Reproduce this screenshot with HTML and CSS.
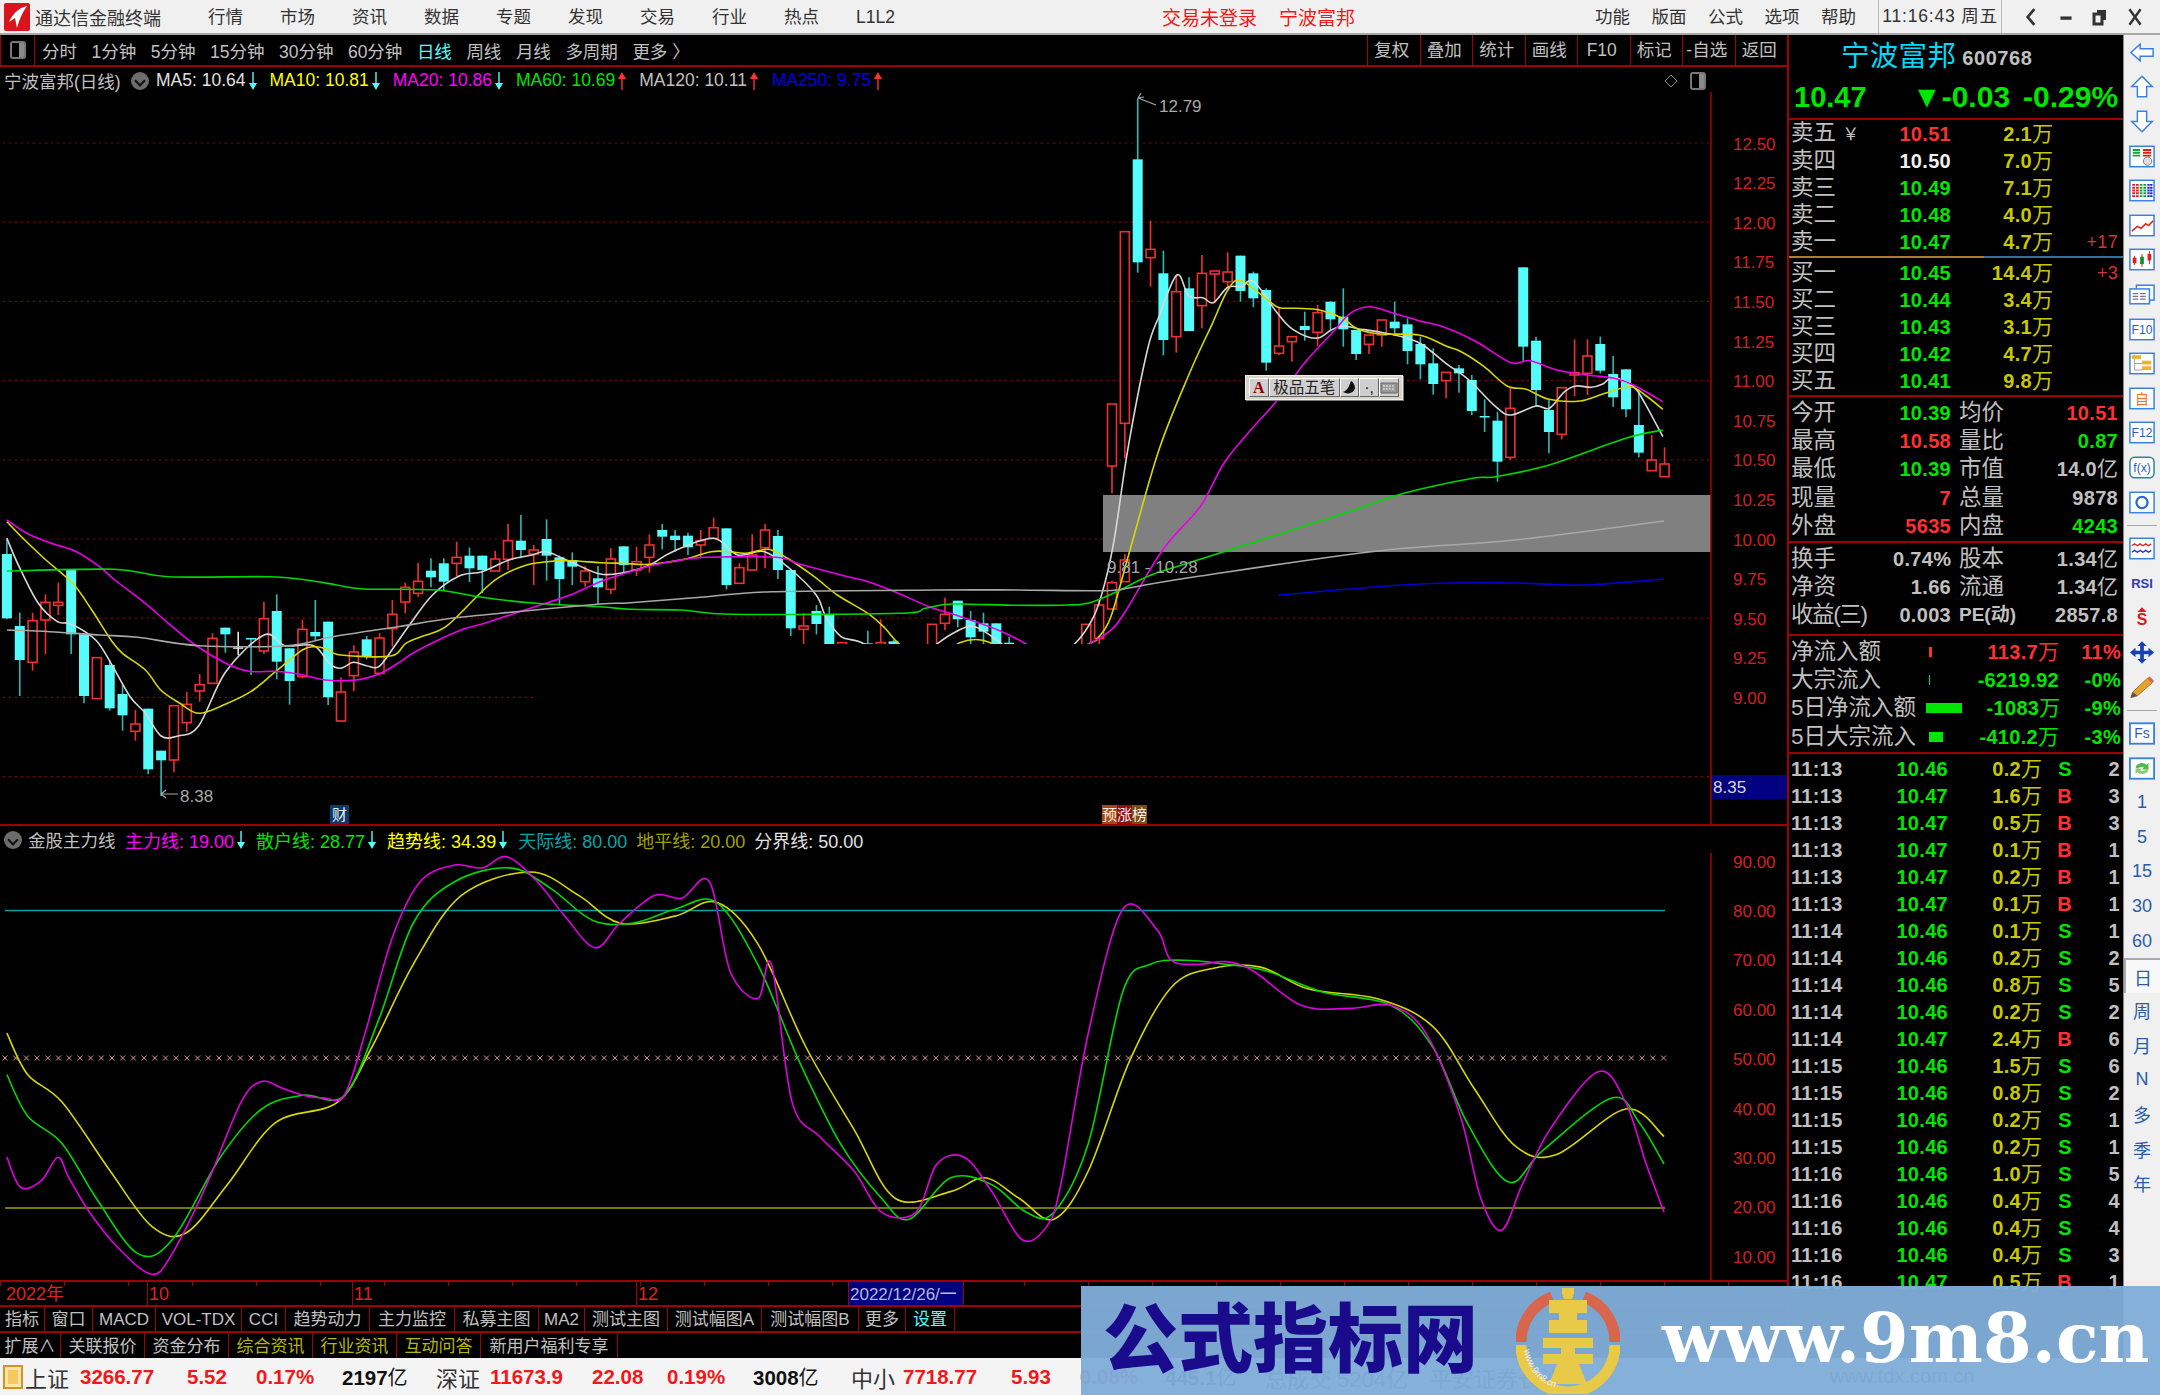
FILE: index.html
```html
<!DOCTYPE html>
<html lang="zh-CN">
<head>
  <meta charset="UTF-8">
  <title>通达信金融终端</title>
  <link rel="stylesheet" href="styles.css">
</head>
<body>
<svg class="defs" width="0" height="0">
  <symbol id="arr-down" viewBox="0 0 10 18"><path d="M5 0V15" stroke="currentColor" stroke-width="1.4"/><path d="M1 11H9L5 18Z" fill="currentColor"/></symbol>
  <symbol id="arr-up" viewBox="0 0 10 18"><path d="M5 3V18" stroke="currentColor" stroke-width="1.4"/><path d="M1 7H9L5 0Z" fill="currentColor"/></symbol>
</svg>

<header class="titlebar">
  <svg class="logo" viewBox="0 0 26 28"><rect width="26" height="28" rx="2" fill="#d8141c"/><path d="M23 3C15 5 9 10 5 19l6-4 2 10c2-8 5-15 10-22Z" fill="#fff"/></svg>
  <span class="app-name">通达信金融终端</span>
  <nav class="menu">
    <a>行情</a><a>市场</a><a>资讯</a><a>数据</a><a>专题</a><a>发现</a><a>交易</a><a>行业</a><a>热点</a><a>L1L2</a>
  </nav>
  <div class="login"><span>交易未登录</span><span>宁波富邦</span></div>
  <nav class="menu-right"><a>功能</a><a>版面</a><a>公式</a><a>选项</a><a>帮助</a></nav>
  <div class="clock">11:16:43 周五</div>
  <div class="win-btns">
    <svg viewBox="0 0 14 18"><path d="M10 2 4 9l6 7" fill="none" stroke="#333" stroke-width="2.4"/></svg>
    <svg viewBox="0 0 14 18"><path d="M2 10h10" stroke="#333" stroke-width="3"/></svg>
    <svg viewBox="0 0 16 18"><path d="M5 2h9v10h-3V5H5Z" fill="#333"/><path d="M2 6h8v10H2Z" fill="none" stroke="#333" stroke-width="3"/></svg>
    <svg viewBox="0 0 14 18"><path d="m2 2 10 14M12 2 2 16" stroke="#333" stroke-width="2.2"/></svg>
  </div>
</header>

<div class="workspace">
  <main class="main">
    <div class="period-bar">
      <div class="period-icon"><i></i></div>
      <div class="periods">
        <span>分时</span><span>1分钟</span><span>5分钟</span><span>15分钟</span><span>30分钟</span><span>60分钟</span><span class="on">日线</span><span>周线</span><span>月线</span><span>多周期</span><span>更多 〉</span>
      </div>
      <div class="chart-btns">
        <span>复权</span><span>叠加</span><span>统计</span><span>画线</span><span>F10</span><span>标记</span><span>-自选</span><span>返回</span>
      </div>
    </div>

    <section class="kline-pane">
      <div class="legend">
        <span class="stock">宁波富邦(日线)</span>
        <span class="dot"></span>
        <span class="c-white ma">MA5: 10.64</span><svg class="arr c-cyan"><use href="#arr-down"/></svg>
        <span class="c-yellow ma">MA10: 10.81</span><svg class="arr c-cyan"><use href="#arr-down"/></svg>
        <span class="c-magenta ma">MA20: 10.86</span><svg class="arr c-cyan"><use href="#arr-down"/></svg>
        <span class="c-green ma">MA60: 10.69</span><svg class="arr c-red"><use href="#arr-up"/></svg>
        <span class="c-gray ma">MA120: 10.11</span><svg class="arr c-red"><use href="#arr-up"/></svg>
        <span class="c-blue ma ma-last">MA250: 9.75</span><svg class="arr c-red"><use href="#arr-up"/></svg>
        <span class="legend-end">
          <svg width="14" height="18" viewBox="0 0 14 18"><path d="M7 3 13 9 7 15 1 9Z" fill="none" stroke="#8a8a8a"/></svg>
          <span class="period-icon-sm"><i></i></span>
        </span>
      </div>
      <svg id="kline" class="chart" viewBox="0 92 1787 733" width="1787" height="733"></svg>
      <div class="ime">
        <b>A</b><span class="ime-name">极品五笔</span>
        <span class="ime-btn">
          <svg width="16" height="16" viewBox="0 0 16 16"><path d="M10 1C8 6 7 10 2 12c5 3 11 1 12-4 0-3-2-6-4-7Z" fill="#111"/></svg>
        </span>
        <span class="ime-btn">·,</span>
        <span class="ime-btn">
          <svg width="18" height="14" viewBox="0 0 18 14"><path d="M1 2h16v10H1Z" fill="#999" stroke="#666"/><path d="M3 5h12M3 8h12" stroke="#eee" stroke-dasharray="2 1"/></svg>
        </span>
      </div>
      <span class="event event-cai">财</span>
      <span class="event event-bang"><i>预</i><i>涨</i><i>榜</i></span>
    </section>

    <section class="sub-pane">
      <div class="legend legend-sub">
        <span class="dot"></span>
        <span class="c-gray ind-name">金股主力线</span>
        <span class="c-magenta ind">主力线: 19.00</span><svg class="arr c-cyan"><use href="#arr-down"/></svg>
        <span class="c-green ind">散户线: 28.77</span><svg class="arr c-cyan"><use href="#arr-down"/></svg>
        <span class="c-yellow ind">趋势线: 34.39</span><svg class="arr c-cyan"><use href="#arr-down"/></svg>
        <span class="c-teal ind">天际线: 80.00</span>
        <span class="c-olive ind">地平线: 20.00</span>
        <span class="c-white ind">分界线: 50.00</span>
      </div>
      <svg id="indicator" class="chart" viewBox="0 853 1787 427" width="1787" height="427"></svg>
    </section>

    <div class="time-axis">
      <span class="t-year">2022年</span><span class="t-oct">10</span><span class="t-nov">11</span><span class="t-dec">12</span><span class="t-cur">2022/12/26/一</span>
    </div>

    <div class="tab-row">
      <span class="w45">指标</span><span class="w48">窗口</span><span class="w63">MACD</span><span class="w86">VOL-TDX</span><span class="w44">CCI</span><span class="w84">趋势动力</span><span class="w85">主力监控</span><span class="w84">私募主图</span><span class="w46">MA2</span><span class="w83">测试主图</span><span class="w94">测试幅图A</span><span class="w97">测试幅图B</span><span class="w47">更多</span><span class="w49 cy">设置</span>
    </div>
    <div class="tab-row">
      <span class="w61">扩展∧</span><span class="w84">关联报价</span><span class="w84">资金分布</span><span class="w84 yl">综合资讯</span><span class="w84 yl">行业资讯</span><span class="w84 yl">互动问答</span><span class="w137">新用户福利专享</span>
    </div>
  </main>

  <aside class="quote">
    <div class="q-head">
      <div class="q-title"><span class="q-name">宁波富邦</span><span class="q-code">600768</span></div>
      <div class="q-price"><span class="q-last">10.47</span><span class="q-chg">▼-0.03</span><span class="q-pct">-0.29%</span></div>
    </div>

    <div class="book">
      <div class="lv"><span class="lab">卖五 <em>￥</em></span><b class="r">10.51</b><b class="y">2.1<i>万</i></b><u></u></div>
      <div class="lv"><span class="lab">卖四</span><b class="w">10.50</b><b class="y">7.0<i>万</i></b><u></u></div>
      <div class="lv"><span class="lab">卖三</span><b class="g">10.49</b><b class="y">7.1<i>万</i></b><u></u></div>
      <div class="lv"><span class="lab">卖二</span><b class="g">10.48</b><b class="y">4.0<i>万</i></b><u></u></div>
      <div class="lv"><span class="lab">卖一</span><b class="g">10.47</b><b class="y">4.7<i>万</i></b><u>+17</u></div>
    </div>
    <div class="book-split"></div>
    <div class="book book-bid">
      <div class="lv"><span class="lab">买一</span><b class="g">10.45</b><b class="y">14.4<i>万</i></b><u>+3</u></div>
      <div class="lv"><span class="lab">买二</span><b class="g">10.44</b><b class="y">3.4<i>万</i></b><u></u></div>
      <div class="lv"><span class="lab">买三</span><b class="g">10.43</b><b class="y">3.1<i>万</i></b><u></u></div>
      <div class="lv"><span class="lab">买四</span><b class="g">10.42</b><b class="y">4.7<i>万</i></b><u></u></div>
      <div class="lv"><span class="lab">买五</span><b class="g">10.41</b><b class="y">9.8<i>万</i></b><u></u></div>
    </div>

    <div class="stats">
      <div class="st"><span class="lab">今开</span><b class="g">10.39</b><span class="lab">均价</span><b class="r">10.51</b></div>
      <div class="st"><span class="lab">最高</span><b class="r">10.58</b><span class="lab">量比</span><b class="g">0.87</b></div>
      <div class="st"><span class="lab">最低</span><b class="g">10.39</b><span class="lab">市值</span><b>14.0<i>亿</i></b></div>
      <div class="st"><span class="lab">现量</span><b class="r">7</b><span class="lab">总量</span><b>9878</b></div>
      <div class="st"><span class="lab">外盘</span><b class="r">5635</b><span class="lab">内盘</span><b class="g">4243</b></div>
    </div>
    <div class="stats stats-b">
      <div class="st"><span class="lab">换手</span><b>0.74%</b><span class="lab">股本</span><b>1.34<i>亿</i></b></div>
      <div class="st"><span class="lab">净资</span><b>1.66</b><span class="lab">流通</span><b>1.34<i>亿</i></b></div>
      <div class="st"><span class="lab eps">收益(三)</span><b>0.003</b><span class="lab pe">PE(动)</span><b>2857.8</b></div>
    </div>

    <div class="flows">
      <div class="fl"><span class="lab">净流入额</span><s class="bar bar-r bar3"></s><b class="r">113.7<i>万</i></b><b class="r">11%</b></div>
      <div class="fl"><span class="lab">大宗流入</span><s class="bar bar-g bar1"></s><b class="g">-6219.92</b><b class="g">-0%</b></div>
      <div class="fl"><span class="lab">5日净流入额</span><s class="bar bar-g bar36"></s><b class="g">-1083<i>万</i></b><b class="g">-9%</b></div>
      <div class="fl"><span class="lab">5日大宗流入</span><s class="bar bar-g bar14"></s><b class="g">-410.2<i>万</i></b><b class="g">-3%</b></div>
    </div>

    <div class="ticks">
      <div class="tk"><b>11:13</b><b class="g">10.46</b><b class="y">0.2<i>万</i></b><b class="g">S</b><b>2</b></div>
      <div class="tk"><b>11:13</b><b class="g">10.47</b><b class="y">1.6<i>万</i></b><b class="r">B</b><b>3</b></div>
      <div class="tk"><b>11:13</b><b class="g">10.47</b><b class="y">0.5<i>万</i></b><b class="r">B</b><b>3</b></div>
      <div class="tk"><b>11:13</b><b class="g">10.47</b><b class="y">0.1<i>万</i></b><b class="r">B</b><b>1</b></div>
      <div class="tk"><b>11:13</b><b class="g">10.47</b><b class="y">0.2<i>万</i></b><b class="r">B</b><b>1</b></div>
      <div class="tk"><b>11:13</b><b class="g">10.47</b><b class="y">0.1<i>万</i></b><b class="r">B</b><b>1</b></div>
      <div class="tk"><b>11:14</b><b class="g">10.46</b><b class="y">0.1<i>万</i></b><b class="g">S</b><b>1</b></div>
      <div class="tk"><b>11:14</b><b class="g">10.46</b><b class="y">0.2<i>万</i></b><b class="g">S</b><b>2</b></div>
      <div class="tk"><b>11:14</b><b class="g">10.46</b><b class="y">0.8<i>万</i></b><b class="g">S</b><b>5</b></div>
      <div class="tk"><b>11:14</b><b class="g">10.46</b><b class="y">0.2<i>万</i></b><b class="g">S</b><b>2</b></div>
      <div class="tk"><b>11:14</b><b class="g">10.47</b><b class="y">2.4<i>万</i></b><b class="r">B</b><b>6</b></div>
      <div class="tk"><b>11:15</b><b class="g">10.46</b><b class="y">1.5<i>万</i></b><b class="g">S</b><b>6</b></div>
      <div class="tk"><b>11:15</b><b class="g">10.46</b><b class="y">0.8<i>万</i></b><b class="g">S</b><b>2</b></div>
      <div class="tk"><b>11:15</b><b class="g">10.46</b><b class="y">0.2<i>万</i></b><b class="g">S</b><b>1</b></div>
      <div class="tk"><b>11:15</b><b class="g">10.46</b><b class="y">0.2<i>万</i></b><b class="g">S</b><b>1</b></div>
      <div class="tk"><b>11:16</b><b class="g">10.46</b><b class="y">1.0<i>万</i></b><b class="g">S</b><b>5</b></div>
      <div class="tk"><b>11:16</b><b class="g">10.46</b><b class="y">0.4<i>万</i></b><b class="g">S</b><b>4</b></div>
      <div class="tk"><b>11:16</b><b class="g">10.46</b><b class="y">0.4<i>万</i></b><b class="g">S</b><b>4</b></div>
      <div class="tk"><b>11:16</b><b class="g">10.46</b><b class="y">0.4<i>万</i></b><b class="g">S</b><b>3</b></div>
      <div class="tk"><b>11:16</b><b class="g">10.47</b><b class="y">0.5<i>万</i></b><b class="r">B</b><b>1</b></div>
    </div>
  </aside>

  <nav class="dock">
    <a><svg viewBox="0 0 28 24"><path class="ol" d="M2 12 12 3v5h14v8H12v5Z"/></svg></a>
    <a><svg viewBox="0 0 28 24"><path class="ol" d="M14 1 25 12h-6v11H9V12H3Z"/></svg></a>
    <a><svg viewBox="0 0 28 24"><path class="ol" d="M14 23 25 12h-6V1H9v11H3Z"/></svg></a>
    <a><svg viewBox="0 0 28 24"><rect class="box" x="1" y="1" width="26" height="22"/><path d="M4 5h8M4 8h8M4 11h8" stroke="#19a040" stroke-width="2"/><path d="M15 5h9M15 8h9M15 11h9" stroke="#e02020" stroke-width="2"/><circle cx="20" cy="17" r="4.5" fill="#ddd" stroke="#777"/></svg></a>
    <a><svg viewBox="0 0 28 24"><rect class="box" x="1" y="1" width="26" height="22"/><path d="M5 5v14M9 5v14" stroke="#e02020" stroke-width="3" stroke-dasharray="2 1"/><path d="M13 5v14M17 5v14" stroke="#18a040" stroke-width="3" stroke-dasharray="2 1"/><path d="M21 5v14M24 5v14" stroke="#1828d0" stroke-width="2.5" stroke-dasharray="2 1"/></svg></a>
    <a><svg viewBox="0 0 28 24"><rect class="box" x="1" y="1" width="26" height="22"/><path d="M3 18 9 13l4 2 5-5 3 2 5-5" fill="none" stroke="#e02020" stroke-width="1.6"/></svg></a>
    <a><svg viewBox="0 0 28 24"><rect class="box" x="1" y="1" width="26" height="22"/><path d="M6 8v10M14 6v14M22 3v14" stroke="#c02020"/><rect x="4" y="10" width="4" height="6" fill="#e02020"/><rect x="12" y="9" width="4" height="8" fill="#109030"/><rect x="20" y="6" width="4" height="7" fill="#e02020"/></svg></a>
    <a><svg viewBox="0 0 28 24"><rect class="box" x="8" y="2" width="19" height="16"/><rect class="box" x="1" y="6" width="21" height="16"/><path d="M4 11h6M12 11h6M4 14h6M12 14h6M4 17h6M12 17h6" stroke="#777" stroke-width="1.5"/></svg></a>
    <a><svg viewBox="0 0 28 24"><rect class="box" x="1" y="1" width="26" height="22"/><text class="ico-t" x="14" y="17" font-size="13">F10</text></svg></a>
    <a><svg viewBox="0 0 28 24"><rect class="box" x="1" y="1" width="26" height="22"/><path d="M6 7v12h8M6 12h8" fill="none" stroke="#999"/><rect x="3" y="3" width="10" height="4" fill="#f0b030"/><rect x="14" y="9" width="10" height="4" fill="#f0b030"/><rect x="14" y="15" width="10" height="4" fill="#f0b030"/></svg></a>
    <a><svg viewBox="0 0 28 24"><rect class="box" x="1" y="1" width="26" height="22"/><text class="ico-t ico-or" x="14" y="18" font-size="15">自</text></svg></a>
    <a><svg viewBox="0 0 28 24"><rect class="box" x="1" y="1" width="26" height="22"/><text class="ico-t" x="14" y="17" font-size="13">F12</text></svg></a>
    <a><svg viewBox="0 0 28 24"><rect class="box box-teal" x="1" y="1" width="26" height="22" rx="5"/><text class="ico-t" x="14" y="17" font-size="13">f(x)</text></svg></a>
    <a><svg viewBox="0 0 28 24"><rect class="box" x="1" y="1" width="26" height="22"/><circle cx="14" cy="12" r="6" fill="none" stroke="#2a6ac8" stroke-width="2.4"/></svg></a>
    <hr>
    <a><svg viewBox="0 0 28 24"><rect class="box" x="1" y="1" width="26" height="22"/><path d="m3 9 3-2 3 2 3-2 3 2 3-2 3 2 3-2" fill="none" stroke="#e02020" stroke-width="1.4"/><path d="m3 16 3-2 3 2 3-2 3 2 3-2 3 2 3-2" fill="none" stroke="#2030d0" stroke-width="1.4"/></svg></a>
    <a><svg viewBox="0 0 28 24"><text class="ico-t ico-rsi" x="14" y="17" font-size="14">RSI</text></svg></a>
    <a><svg viewBox="0 0 28 24"><path d="M14 1 9 6h10Z" fill="#d02020"/><text class="ico-t ico-s" x="14" y="20" font-size="17">S</text></svg></a>
    <a><svg viewBox="0 0 28 24"><path d="m14 0 5 5h-3v5h5V7l6 5-6 5v-3h-5v5h3l-5 5-5-5h3v-5H7v3l-6-5 6-5v3h5V5H9Z" fill="#1840b0"/></svg></a>
    <a><svg viewBox="0 0 28 24"><path d="M4 18 20 3l5 5L9 22l-7 2Z" fill="#e8a030" stroke="#a07020"/><path d="m20 3 2-2 5 5-2 2Z" fill="#d86050"/><path d="m4 18 5 4-7 2Z" fill="#555"/></svg></a>
    <hr>
    <a><svg viewBox="0 0 28 24"><rect class="box box-2" x="1" y="1" width="26" height="22"/><text class="ico-t" x="14" y="17" font-size="15">Fs</text></svg></a>
    <a><svg viewBox="0 0 28 24"><rect class="box box-2" x="1" y="1" width="26" height="22"/><path d="M7 11a7 6 0 0 1 12-3l2-2v7h-7l2-2a4 3 0 0 0-6 1Z" fill="#50b850"/><path d="M21 13a7 6 0 0 1-12 3l-2 2v-6h7l-2 2a4 3 0 0 0 6-1Z" fill="#88cc70"/></svg></a>
    <a class="num">1</a><a class="num">5</a><a class="num">15</a><a class="num">30</a><a class="num">60</a>
    <a class="num cur">日</a><a class="num">周</a><a class="num">月</a><a class="num">N</a><a class="num">多</a><a class="num">季</a><a class="num">年</a>
  </nav>
</div>

<footer class="status">
  <span class="s-icon"></span>
  <span class="s-name s0">上证</span><b class="s-r s1">3266.77</b><b class="s-r s2">5.52</b><b class="s-r s3">0.17%</b><b class="s-k s4">2197<i>亿</i></b>
  <span class="s-name s5">深证</span><b class="s-r s6">11673.9</b><b class="s-r s7">22.08</b><b class="s-r s8">0.19%</b><b class="s-k s9">3008<i>亿</i></b>
  <span class="s-name s10">中小</span><b class="s-r s11">7718.77</b><b class="s-r s12">5.93</b><b class="s-r s13">0.08%</b><b class="s-k s14">445.1<i>亿</i></b>
  <span class="s-name s15">总成交 5204亿</span><span class="s-name s16">平安证券长沙</span>
  <span class="s-name s-site">www.tdx.com.cn</span>
</footer>

<div class="watermark">
  <span class="wm-cn">公式指标网</span>
  <svg class="wm-logo" viewBox="0 0 104 106">
    <path d="M5 54A47 47 0 0 1 36 9" fill="none" stroke="#d8654e" stroke-width="11"/>
    <path d="M68 9A47 47 0 0 1 99 54" fill="none" stroke="#d8654e" stroke-width="11"/>
    <path d="M99 57A47 47 0 0 1 52 104A47 47 0 0 1 5 57" fill="none" stroke="#e8c948" stroke-width="11"/>
    <path d="M46 0h12v6l-2 5h-8l-2-5ZM33 12h38v13h-10v7h10v13h-38v-13h10v-7h-10ZM27 50h50v10h-18v6h18v10h-14l8 20h-38l8-20h-14v-10h18v-6h-18Z" fill="#e8c948"/>
    <path id="wm-arc" d="M8 62A46 46 0 0 0 40 100" fill="none"/>
    <text class="wm-small"><textPath href="#wm-arc">www.9m8.cn</textPath></text>
  </svg>
  <span class="wm-url">www.9m8.cn</span>
</div>

<script src="chart.js"></script>
</body>
</html>
```

FILE: styles.css
```css
* {
  box-sizing: border-box;
}

html, body {
  margin: 0;
  padding: 0;
}

body {
  width: 2160px;
  height: 1395px;
  position: relative;
  overflow: hidden;
  background: #000;
  color: #c0c0c0;
  font-family: "Liberation Sans", "Noto Sans CJK SC", sans-serif;
  font-size: 17.5px;
}

.defs {
  position: absolute;
}

i, em, s, u {
  font-style: normal;
  text-decoration: none;
}

/* title bar */
.titlebar {
  height: 35px;
  display: flex;
  align-items: center;
  background: #f0f0f0;
  border-bottom: 2px solid #a8a8a8;
  color: #333;
}

.logo {
  width: 26px;
  height: 28px;
  margin-left: 4px;
}

.app-name {
  width: 128px;
  margin-left: 5px;
  font-size: 18px;
  white-space: nowrap;
}

.menu {
  display: flex;
  flex: none;
  gap: 37px;
  margin-left: 45px;
  width: 684px;
  white-space: nowrap;
}

.menu a, .menu-right a {
  flex: none;
  height: 24px;
  line-height: 24px;
}

.menu-right {
  display: flex;
  flex: none;
  gap: 21.5px;
  width: 283px;
  white-space: nowrap;
}

.login {
  display: flex;
  flex: none;
  gap: 22px;
  width: 433px;
  margin-left: 270px;
  color: #f01818;
  font-size: 19px;
}

.clock {
  flex: none;
  width: 124px;
  height: 33px;
  line-height: 33px;
  text-align: center;
  border-left: 1px solid #bbb;
  border-right: 1px solid #bbb;
  white-space: nowrap;
  font-size: 17.5px;
  letter-spacing: 0.8px;
}

.win-btns {
  flex: 1;
  display: flex;
  justify-content: space-around;
  padding: 0 8px 0 12px;
}

.win-btns svg {
  width: 16px;
  height: 20px;
}

/* layout */
.workspace {
  height: 1323px;
  display: flex;
}

.main {
  width: 1787px;
  display: flex;
  flex-direction: column;
}

.period-bar {
  height: 32px;
  flex: none;
  display: flex;
  align-items: center;
  border-bottom: 2px solid #a00000;
}

.period-icon {
  width: 35px;
  height: 100%;
  border-right: 1px solid #a00000;
  border-left: 1px solid #a00000;
  display: flex;
  align-items: center;
  justify-content: center;
}

.period-icon i, .period-icon-sm i {
  display: block;
  width: 16px;
  height: 18px;
  border: 2px solid #777;
  border-radius: 3px;
  background: linear-gradient(90deg, #000 55%, #8a8a8a 55%);
}

.periods {
  display: flex;
  gap: 14.5px;
  margin-left: 7px;
}

.periods span {
  white-space: nowrap;
}

.periods .on {
  color: #54fcfc;
}

.chart-btns {
  margin-left: auto;
  display: flex;
  height: 100%;
  text-align: center;
  line-height: 31px;
}

.chart-btns span {
  width: 52.5px;
  padding-right: 4px;
  border-left: 1px solid #a00000;
  white-space: nowrap;
}

/* chart panes */
.kline-pane {
  height: 759px;
  flex: none;
  position: relative;
  border-bottom: 2px solid #a00000;
}

.sub-pane {
  height: 456px;
  flex: none;
  border-bottom: 2px solid #a00000;
}

.legend {
  height: 27px;
  display: flex;
  align-items: center;
  white-space: nowrap;
}

.kline-pane .legend {
  height: 25px;
  padding-top: 2px;
}

.stock {
  margin-left: 4px;
  width: 127px;
}

.dot {
  width: 18px;
  height: 18px;
  border-radius: 50%;
  background: #6c6c6c;
  position: relative;
  flex: none;
}

.dot::after {
  content: "";
  position: absolute;
  left: 5px;
  top: 5px;
  width: 6px;
  height: 6px;
  border-right: 2px solid #111;
  border-bottom: 2px solid #111;
  transform: rotate(45deg);
}

.ma {
  margin-left: 12px;
}

.legend .dot + .ma {
  margin-left: 7px;
}

.ma-last {
  margin-left: 13px;
}

.arr {
  width: 10px;
  height: 18px;
  flex: none;
  margin-left: 2px;
}

.legend-end {
  margin-left: auto;
  margin-right: 81px;
  display: flex;
  gap: 12px;
  align-items: center;
}

.period-icon-sm {
  display: block;
}

.legend-sub {
  padding-left: 4px;
}

.ind-name {
  margin-left: 6px;
  width: 97px;
}

.ind {
  margin-right: 9px;
  font-size: 18px;
}

.legend-sub .arr + .ind {
  margin-left: 10px;
}

.legend-sub .arr {
  margin-left: -7px;
}

.c-white { color: #e0e0e0; }
.c-gray { color: #c0c0c0; }
.c-yellow { color: #ffff00; }
.c-magenta { color: #ff00ff; }
.c-green { color: #00e600; }
.c-blue { color: #0000e6; }
.c-cyan { color: #54fcfc; }
.c-red { color: #ff3232; }
.c-teal { color: #00a8a8; }
.c-olive { color: #a0a000; }

.chart {
  display: block;
}

.axis-label {
  fill: #d42020;
  font-size: 17px;
  dominant-baseline: central;
}

.axis-cur {
  fill: #d8d8d8;
  font-size: 17px;
  dominant-baseline: central;
}

.peak-label {
  fill: #a8a8a8;
  font-size: 17px;
  dominant-baseline: central;
}

.ime {
  position: absolute;
  left: 1245px;
  top: 308px;
  width: 158px;
  height: 25px;
  display: flex;
  padding: 2px 3px;
  background: #d8d4c8;
  border: 1px solid #eee;
  box-shadow: 1px 1px 0 #777;
  color: #222;
  font-size: 16px;
  line-height: 18px;
  text-align: center;
}

.ime b, .ime-name, .ime-btn {
  background: #cfcfcf;
  border: 1px solid;
  border-color: #fff #666 #666 #fff;
}

.ime b {
  width: 20px;
  color: #8b0000;
  font-family: "Liberation Serif", serif;
}

.ime-name {
  width: 72px;
  white-space: nowrap;
  font-size: 15.5px;
}

.ime-btn {
  width: 20px;
  display: flex;
  align-items: center;
  justify-content: center;
}

.event {
  position: absolute;
  top: 738px;
  height: 19px;
  color: #f0f0f0;
  font-size: 15px;
  line-height: 19px;
}

.event-cai {
  left: 330px;
  width: 19px;
  text-align: center;
  background: #0c3a6e;
}

.event-bang {
  left: 1102px;
  display: flex;
}

.event-bang i {
  width: 15px;
  text-align: center;
  background: #a8480e;
}

.event-bang i:nth-child(2) {
  background: #8a1212;
}

.event-bang i:nth-child(3) {
  background: #7c4a12;
}

/* time axis and tabs */
.time-axis {
  height: 23px;
  flex: none;
  display: flex;
  color: #e02020;
  line-height: 25px;
  font-size: 18px;
  background: repeating-linear-gradient(90deg, #a00000 0 1px, transparent 1px 64px) 0 0 / 100% 4px no-repeat;
}

.time-axis span {
  padding-left: 1px;
  border-left: 1px solid #a00000;
  white-space: nowrap;
}

.time-axis span:first-child {
  border-left: 0;
  padding-left: 6px;
}

.t-year { width: 147px; }
.t-oct { width: 205px; }
.t-nov { width: 284px; }
.t-dec { width: 212px; }

.time-axis .t-cur {
  width: 116px;
  font-size: 17px;
  background: #000080;
  color: #b8b8d8;
  border-right: 1px solid #a00000;
}

.tab-row {
  height: 26px;
  flex: none;
  display: flex;
  border-top: 2px solid #a00000;
  line-height: 26px;
  font-size: 17px;
  overflow: hidden;
}

.tab-row span {
  flex: none;
  text-align: center;
  white-space: nowrap;
  border-right: 1px solid #a00000;
}

.tab-row + .tab-row {
  height: 27px;
  line-height: 28px;
}

.tab-row .cy { color: #54fcfc; }
.tab-row .yl { color: #b8b800; }

.w44 { width: 44px; }
.w45 { width: 45px; }
.w46 { width: 46px; }
.w47 { width: 47px; }
.w48 { width: 48px; }
.w49 { width: 49px; }
.w61 { width: 61px; }
.w63 { width: 63px; }
.w83 { width: 83px; }
.w84 { width: 84px; }
.w85 { width: 85px; }
.w86 { width: 86px; }
.w94 { width: 94px; }
.w97 { width: 97px; }
.w137 { width: 137px; }

/* quote panel */
.quote {
  width: 336px;
  flex: none;
  border-left: 2px solid #a00000;
  overflow: hidden;
  font-weight: 700;
  font-size: 20px;
  line-height: 24px;
  letter-spacing: 0.3px;
}

.quote i {
  font-weight: 400;
  font-size: 21px;
  letter-spacing: 0;
}

.quote .lab {
  font-weight: 400;
  font-size: 22.5px;
  letter-spacing: 0;
  white-space: nowrap;
}

.quote .lab em {
  font-size: 17px;
}

.r { color: #ff3030; }
.g { color: #00e600; }
.y { color: #c8c800; }
.w { color: #f0f0f0; }

.q-head {
  height: 85px;
  border-bottom: 2px solid #a00000;
}

.q-title {
  height: 41px;
  display: flex;
  align-items: center;
  padding-left: 52px;
  gap: 6px;
}

.q-name {
  color: #00d8f8;
  font-size: 28.5px;
  font-weight: 400;
}

.q-code {
  font-size: 20px;
  padding-top: 5px;
  letter-spacing: 0.6px;
}

.q-price {
  display: flex;
  align-items: center;
  color: #00e600;
  height: 42px;
  padding-left: 5px;
  font-size: 30px;
  letter-spacing: 0;
}

.q-last {
  width: 118px;
  font-size: 29px;
}

.q-chg {
  width: 112px;
}

.q-pct {
  margin-left: -1px;
}

.lv {
  height: 27.2px;
  display: grid;
  grid-template-columns: 110px 50px 102px 65px;
  align-items: center;
  padding-left: 2px;
  white-space: nowrap;
}

.lv > b {
  text-align: right;
  justify-self: end;
}

.lv > u {
  font-weight: 400;
  text-align: right;
  color: #d83030;
  font-size: 18px;
}

.book-split {
  height: 2px;
  background: linear-gradient(90deg, #b07a30 195px, #3070a0 195px);
}

.book-bid {
  padding-top: 1px;
  height: 139px;
  border-bottom: 2px solid #a00000;
}

.stats {
  height: 146px;
  padding-top: 1.5px;
  border-bottom: 2px solid #a00000;
}

.stats-b {
  height: 93px;
}

.st {
  height: 28.4px;
  display: flex;
  align-items: center;
  padding-left: 2px;
  white-space: nowrap;
}

.st .lab:first-child {
  width: 102px;
}

.st b:nth-child(2) {
  width: 58px;
  text-align: right;
}

.st .lab:nth-child(3) {
  width: 50px;
  margin-left: 8px;
}

.st .eps {
  letter-spacing: -1.4px;
}

.quote .st .pe {
  font-size: 19px;
  font-weight: 700;
}

.st b:nth-child(4) {
  width: 109px;
  text-align: right;
}

.flows {
  height: 118px;
  padding-top: 1.5px;
  border-bottom: 2px solid #a00000;
}

.fl {
  height: 28.4px;
  display: flex;
  align-items: center;
  padding-left: 2px;
  white-space: nowrap;
}

.fl .lab {
  width: 138px;
}

.fl > s {
  flex: none;
}

.fl b:nth-of-type(1) {
  margin-left: auto;
  width: 100px;
  text-align: right;
}

.fl b:nth-of-type(2) {
  width: 62px;
  text-align: right;
  margin-right: 2px;
}

.bar {
  height: 10px;
}

.bar-r { background: #ff3030; }
.bar-g { background: #00e600; }
.bar1 { width: 1px; }
.bar3 { width: 3px; }
.bar14 { width: 14px; }
.bar36 { width: 36px; }

.ticks {
  padding-top: 2px;
}

.tk {
  height: 27px;
  display: grid;
  grid-template-columns: 74px 83px 94px 30px 48px;
  align-items: center;
  padding-left: 2px;
  white-space: nowrap;
}

.tk b:nth-child(n+2) {
  text-align: right;
}

/* right dock */
.dock {
  flex: 1;
  background: #f0f0f0;
  display: flex;
  flex-direction: column;
  align-items: center;
  color: #2a5ca8;
  border-left: 1px solid #888;
}

.dock a {
  height: 34.6px;
  width: 100%;
  flex: none;
  display: flex;
  align-items: center;
  justify-content: center;
}

.dock svg {
  width: 26px;
  height: 23px;
}

.dock hr {
  height: 12px;
  width: 30px;
  margin: 0;
  flex: none;
  border: 0;
  background: linear-gradient(#aaa, #aaa) center / 100% 1px no-repeat;
}

.ol, .box {
  fill: #fff;
  stroke: #3a80e0;
  stroke-width: 1.6;
}

.box-teal {
  stroke: #2a8a8a;
}

.box-2 {
  stroke-width: 2;
}

.ico-t {
  fill: #2a5ac8;
  text-anchor: middle;
}

.ico-or {
  fill: #f07020;
}

.ico-rsi {
  font-weight: 700;
  fill: #2a3ab8;
}

.ico-s {
  font-weight: 700;
  fill: #d02020;
}

.dock .num {
  font-size: 18px;
}

.dock .cur {
  background: #f8f8f8;
  border-top: 2px solid #aaa;
  border-left: 2px solid #aaa;
}

/* bottom status */
.status {
  height: 37px;
  display: flex;
  align-items: center;
  background: #f4f4f4;
  white-space: nowrap;
  font-size: 20.5px;
  overflow: hidden;
}

.status b {
  flex: none;
}

.status i {
  font-weight: 400;
  font-size: 20px;
}

.s-icon {
  width: 20px;
  height: 24px;
  margin: 0 0 0 3px;
  flex: none;
  background: #f8c860;
  border: 2px solid #d89020;
  box-shadow: inset 0 0 0 3px #fde8a8;
}

.s-name {
  color: #333;
  font-size: 22px;
  flex: none;
}

.s-r {
  color: #f01818;
}

.s-k {
  color: #111;
}

.s0 { margin-left: 2px; width: 55px; }
.s1 { width: 107px; }
.s2 { width: 69px; }
.s3 { width: 86px; }
.s4 { width: 94px; }
.s5 { width: 54px; }
.s6 { width: 102px; }
.s7 { width: 75px; }
.s8 { width: 86px; }
.s9 { width: 98px; }
.s10 { width: 52px; }
.s11 { width: 108px; }
.s12 { width: 69px; }
.s13 { width: 85px; }
.s14 { width: 100px; }
.s15 { width: 165px; }
.s16 { width: 400px; }
.s-site { color: #555; font-size: 20px; }

/* watermark overlay */
.watermark {
  position: absolute;
  left: 1081px;
  top: 1286px;
  width: 1079px;
  height: 109px;
  display: flex;
  align-items: center;
  background: rgba(127, 173, 217, 0.96);
}

.wm-cn {
  width: 435px;
  padding-left: 22px;
  color: #1a0a8c;
  font-size: 75px;
  font-weight: 900;
  line-height: 1;
  white-space: nowrap;
}

.wm-logo {
  width: 104px;
  height: 106px;
  flex: none;
}

.wm-small {
  fill: #f0f0f0;
  font-size: 9px;
}

.wm-url {
  margin-left: 42px;
  padding-bottom: 5px;
  color: #fff;
  font-family: "DejaVu Serif", serif;
  font-weight: 700;
  font-size: 70px;
  line-height: 1;
  white-space: nowrap;
}
```

FILE: chart.js
```js
// 图表数据: 坐标从截图上量出来的, 按裁剪块记录后换算成页面坐标
const SVG_NS = 'http://www.w3.org/2000/svg';

const CYAN = '#54fcfc';
const WICK = '#30b8b8';
const RED = '#f03030';
const GRID = '#8a0000';
const AXIS = 1711;

function el(tag, attrs, parent, text) {
  const node = document.createElementNS(SVG_NS, tag);
  Object.keys(attrs).forEach(k => node.setAttribute(k, attrs[k]));
  if (text !== undefined) node.textContent = text;
  parent.appendChild(node);
  return node;
}

// 裁剪块换算
const crop = (x0, sx, y0, sy) => ([x, y]) => [x0 + x / sx, y0 + y / sy];
const A = crop(0, 2.613, 500, 3);
const B = crop(600, 2.613, 500, 3);
const C = crop(1090, 2.613, 90, 3);
const S = crop(0, 1 / 1.3776, 0, 1 / 1.3776);

// [high, top, bottom, low, kind]  c=阴线 r=阳线 w=十字
const CANDLES = [
  { start: 0, y0: 500, rows: [
    [115,162,355,358,'c'],[338,378,480,588,'c'],[338,362,487,512,'r'],[283,307,360,462,'r'],
    [248,307,316,345,'r'],[210,210,403,462,'c'],[400,403,588,610,'c'],[473,473,596,596,'r'],
    [480,495,625,632,'c'],[555,582,646,692,'c'],[630,672,694,722,'r'],[626,626,808,822,'c'],
    [752,752,781,888,'c'],[617,617,780,817,'r'],[575,613,668,695,'r'],[522,554,573,605,'r'],
    [400,415,550,550,'r'],[383,383,403,458,'c'],[395,442,445,466,'w'],[414,414,416,525,'c'],
    [305,356,453,462,'r'],[283,333,485,538,'c'],[445,445,543,614,'c'],[360,388,530,535,'r'],
    [300,396,409,420,'c'],[365,365,592,615,'c'],[532,576,663,663,'r'],[436,456,527,574,'r'],
    [408,418,468,478,'c'],[400,414,520,525,'r'],[300,343,386,440,'r'],[248,262,306,340,'r'],
    [188,244,280,290,'r'],[175,212,232,262,'c'],[175,190,245,270,'c'],[125,172,190,228,'r'],
    [143,167,205,246,'c'],[167,167,210,280,'c'],[152,177,213,213,'r'],[72,122,178,210,'r'],
    [45,122,150,175,'c'],[135,150,162,255,'r'],[58,117,167,242,'c'],[167,172,237,316,'c'],
    [157,180,200,255,'c'],[198,213,245,260,'r'],[198,235,262,315,'c']
  ]},
  { start: 47, y0: 500, rows: [
    [145,177,268,282,'r'],[139,139,195,218,'c'],[140,185,210,228,'r'],[103,135,172,218,'r'],
    [72,90,110,148,'c'],[90,107,120,155,'c'],[98,107,142,165,'c'],[90,122,135,170,'r'],
    [53,83,115,115,'r'],[85,85,255,268,'c'],[190,203,250,250,'r'],[103,165,210,210,'r'],
    [72,90,143,205,'r'],[90,108,210,237,'c'],[210,210,385,408,'c'],[340,378,388,440,'r'],
    [315,333,372,403,'c'],[320,345,480,480,'c'],[428,428,445,445,'r'],null,
    [392,430,480,480,'c'],[358,428,470,470,'r'],[420,424,500,500,'c'],null,null,
    [373,373,480,480,'r'],[293,343,370,390,'r'],[302,302,358,382,'c'],[333,360,412,432,'c'],
    [338,370,395,432,'c'],[370,370,470,470,'c'],[410,428,460,460,'c'],null,null,null,null,null,
    [373,373,480,480,'r'],[300,315,415,432,'r'],[242,248,327,330,'r'],[162,180,245,245,'r']
  ]},
  { start: 86, y0: 90, rows: [
    [942,942,1128,1210,'r'],[425,425,1000,1105,'r'],[25,208,517,548,'c'],[392,478,503,590,'r'],
    [482,550,750,796,'c'],[555,605,740,788,'r'],[562,595,723,723,'c'],[495,550,647,715,'r'],
    [543,543,552,640,'r'],[487,546,575,590,'r'],[497,497,603,635,'c'],[545,550,625,652,'c'],
    [595,600,818,842,'c'],[650,768,790,795,'r'],[740,740,755,815,'r'],[665,708,720,752,'c'],
    [645,668,727,768,'r'],[635,635,688,720,'c'],[595,680,718,770,'c'],[720,720,792,810,'c'],
    [735,735,763,792,'r'],[690,690,735,770,'r'],[635,695,715,738,'c'],[685,703,783,823,'c'],
    [740,762,823,868,'c'],[775,820,882,914,'c'],[847,847,872,925,'r'],[825,835,850,908,'c'],
    [855,870,963,975,'c'],[928,978,982,1026,'c']
  ]},
  { start: 116, y0: 240, rows: [
    [515,542,665,725,'c'],[443,505,652,660,'r'],[82,82,320,362,'c'],[290,302,450,500,'c'],
    [480,510,576,640,'c'],[443,443,583,598,'r'],[298,398,405,468,'r'],[298,348,400,465,'r'],
    [290,312,392,400,'c'],[348,402,472,500,'c'],[388,388,508,532,'c'],[455,555,638,652,'c'],
    [585,660,692,692,'r'],[622,672,710,710,'r']
  ]}
];

const LINES = [
  { color: '#d8d8d8', pts: [].concat(
    [[18,115],[50,200],[100,310],[150,365],[186,372],[250,420],[290,490],[340,590],[380,640],[421,708],[465,708],[519,678],[590,515],[690,405],[745,437],[820,437],[860,490],[890,505],[923,487],[958,497],[990,500],[1030,440],[1070,375],[1130,285],[1200,228],[1260,215],[1330,180],[1390,165],[1428,155],[1490,185]].map(A),
    [[0,222],[60,218],[130,195],[190,155],[296,115],[360,165],[430,155],[500,210],[565,285],[590,350],[630,410],[690,432],[780,520],[880,432],[930,395],[980,380],[1050,432],[1140,520],[1240,432],[1290,350],[1320,245],[1345,110]].map(B),
    [[100,1070],[150,780],[180,680],[227,555],[258,618],[295,623],[322,638],[360,592],[395,590],[428,575],[490,670],[530,718],[590,745],[630,720],[660,708],[700,716],[760,727],[830,745],[870,765],[930,820],[990,870],[1060,950],[1100,975],[1165,948],[1200,955],[1240,905],[1270,888],[1310,892],[1340,882],[1368,862],[1420,890],[1450,940],[1497,1040]].map(C)
  )},
  { color: '#d8d800', pts: [].concat(
    [[18,65],[60,115],[120,180],[190,250],[240,330],[290,420],[320,460],[380,510],[420,570],[470,610],[520,640],[590,612],[655,575],[720,515],[790,450],[825,440],[855,448],[890,465],[1020,468],[1060,430],[1100,410],[1165,380],[1250,285],[1300,235],[1370,197],[1430,185],[1490,182]].map(A),
    [[0,188],[60,190],[130,193],[220,178],[290,155],[340,155],[380,160],[440,148],[490,175],[560,230],[620,285],[700,340],[745,385],[780,430],[860,500],[940,428],[1020,428],[1120,520],[1280,430],[1300,415],[1335,350],[1385,150]].map(B),
    [[180,1080],[260,850],[320,700],[360,600],[395,572],[470,635],[495,653],[540,655],[600,660],[660,685],[700,718],[760,732],[860,735],[930,768],[970,785],[1030,830],[1090,888],[1140,898],[1200,928],[1280,933],[1340,912],[1410,890],[1450,915],[1497,958]].map(C)
  )},
  { color: '#e800e8', pts: [].concat(
    [[18,60],[70,100],[130,128],[200,155],[260,200],[300,240],[380,310],[440,370],[510,435],[590,490],[650,514],[720,514],[780,522],[850,540],[930,540],[990,522],[1040,490],[1090,452],[1200,392],[1260,372],[1340,342],[1420,312],[1490,285]].map(A),
    [[0,245],[60,222],[130,198],[210,180],[280,172],[460,172],[520,192],[640,228],[700,245],[770,275],[860,320],[930,345],[1040,390],[1110,430],[1190,490],[1280,430],[1330,395],[1370,340],[1470,150],[1568,20]].map(B),
    [[350,1120],[420,1020],[490,930],[560,820],[640,720],[680,670],[730,650],[800,672],[860,692],[930,713],[1010,755],[1100,818],[1150,812],[1220,840],[1300,855],[1370,865],[1420,885],[1497,935]].map(C)
  )},
  { color: '#00d800', pts: [].concat(
    [[18,213],[300,208],[440,230],[700,230],[800,240],[880,255],[950,267],[1140,270],[1260,292],[1400,310]].map(A),
    [[0,320],[80,328],[210,330],[350,343],[780,340],[850,325],[920,312],[1090,316],[1220,315],[1280,308],[1350,275],[1440,225],[1568,178]].map(B),
    [[690,1260],[820,1210],[1000,1165],[1060,1160],[1200,1125],[1400,1045],[1497,1020]].map(C)
  )},
  { color: '#a8a8a8', pts: [].concat(
    [[18,390],[130,395],[260,405],[360,412],[520,437],[750,437],[870,410],[1040,380],[1180,355],[1350,335]].map(A),
    [[0,312],[80,308],[280,290],[450,275],[880,270],[1085,270],[1320,272],[1400,260],[1568,228]].map(B),
    [[1378,551],[1515,540],[1664,521]]
  )},
  { color: '#0000d0', pts: [[1278,595],[1419,584],[1515,583],[1584,585],[1664,579]] }
];

const MAIN_LINE = [[5,840],[15,862],[30,857],[42,840],[50,855],[65,880],[85,905],[110,925],[125,910],[150,860],[175,800],[190,785],[205,790],[220,795],[235,797],[250,795],[265,750],[285,680],[305,640],[330,628],[350,630],[368,622],[390,640],[410,665],[432,688],[450,670],[475,650],[495,652],[515,640],[530,705],[550,725],[560,700],[575,800],[595,825],[620,850],[640,880],[665,880],[680,845],[700,840],[720,865],[742,900],[760,890],[770,860],[790,750],[815,660],[840,675],[850,697],[870,700],[890,698],[910,705],[945,730],[980,732],[1010,730],[1035,750],[1060,810],[1075,870],[1090,893],[1105,860],[1125,820],[1160,778],[1180,800],[1195,845],[1208,880]];
const RETAIL_LINE = [[5,780],[20,810],[45,830],[70,870],[100,910],[125,900],[160,840],[190,805],[220,795],[250,795],[275,740],[300,670],[330,640],[370,630],[400,645],[430,668],[460,670],[490,660],[520,655],[550,700],[580,770],[610,830],[640,870],[660,885],[690,855],[720,860],[745,880],[765,880],[790,830],[815,720],[835,700],[860,697],[890,700],[920,705],[960,720],[1010,730],[1040,760],[1065,815],[1095,858],[1120,835],[1170,797],[1190,815],[1208,845]];
const TREND_LINE = [[5,750],[20,780],[45,800],[80,850],[110,890],[135,895],[165,860],[200,815],[245,800],[270,760],[300,700],[335,650],[385,633],[420,650],[450,670],[490,665],[520,655],[550,685],[585,760],[620,820],[650,870],[690,865],[715,855],[740,870],[765,885],[790,850],[820,770],[850,717],[880,703],[915,702],[950,718],[1000,725],[1040,745],[1070,790],[1100,832],[1130,838],[1180,805],[1208,825]];

// 折线转成平滑曲线 (Catmull-Rom)
function smoothPath(pts) {
  let d = 'M' + pts[0][0].toFixed(1) + ' ' + pts[0][1].toFixed(1);
  for (let i = 0; i < pts.length - 1; i++) {
    const p0 = pts[Math.max(i - 1, 0)];
    const p1 = pts[i];
    const p2 = pts[i + 1];
    const p3 = pts[Math.min(i + 2, pts.length - 1)];
    const c1 = [p1[0] + (p2[0] - p0[0]) / 6, p1[1] + (p2[1] - p0[1]) / 6];
    const c2 = [p2[0] - (p3[0] - p1[0]) / 6, p2[1] - (p3[1] - p1[1]) / 6];
    d += 'C' + [c1, c2, p2].map(p => p[0].toFixed(1) + ' ' + p[1].toFixed(1)).join(' ');
  }
  return d;
}

function curve(svg, pts, color, width) {
  el('path', { d: smoothPath(pts), fill: 'none', stroke: color, 'stroke-width': width }, svg);
}

function vLine(svg, x, y1, y2, color) {
  if (y2 <= y1) return;
  el('line', { x1: x, x2: x, y1: y1, y2: y2, stroke: color, 'stroke-width': 1.6 }, svg);
}

function drawCandle(svg, i, row, y0) {
  const x = 6.9 + 12.85 * i;
  const [high, top, bottom, low] = row.slice(0, 4).map(v => y0 + v / 3);
  const kind = row[4];
  if (kind === 'c') {
    vLine(svg, x, high, low, WICK);
    el('rect', { x: x - 5, y: top, width: 10, height: Math.max(bottom - top, 1.5), fill: CYAN }, svg);
  } else if (kind === 'r') {
    vLine(svg, x, high, top, RED);
    vLine(svg, x, bottom, low, RED);
    el('rect', { x: x - 4.5, y: top, width: 9, height: bottom - top, fill: '#000', stroke: RED, 'stroke-width': 1.6 }, svg);
  } else {
    vLine(svg, x, high, low, '#e8e8e8');
    el('rect', { x: x - 5, y: top, width: 10, height: 1.5, fill: '#e8e8e8' }, svg);
  }
}

function drawKline(svg) {
  for (let y = 143; y < 780; y += 79.2) {
    // 9.00 这条线只画到左边一段
    const end = Math.abs(y - 697) < 2 ? 535 : AXIS;
    el('line', { x1: 3, x2: end, y1: y, y2: y, stroke: GRID, 'stroke-dasharray': '2 4', 'stroke-width': 1.2 }, svg);
  }

  el('rect', { x: 1103, y: 495, width: AXIS - 1103, height: 57, fill: '#808080' }, svg);

  CANDLES.forEach(group => {
    group.rows.forEach((row, n) => {
      if (row) drawCandle(svg, group.start + n, row, group.y0);
    });
  });

  LINES.forEach(l => curve(svg, l.pts, l.color, 1.6));

  // 盖住的一块区域
  el('rect', { x: 799, y: 644, width: 301, height: 128, fill: '#000' }, svg);

  el('text', { class: 'peak-label', x: 1107, y: 567 }, svg, '9.81 - 10.28');
  el('text', { class: 'peak-label', x: 1159, y: 106 }, svg, '12.79');
  el('text', { class: 'peak-label', x: 180, y: 796 }, svg, '8.38');
  el('path', { d: 'M1156 105 1138 98M1138 98l3-5M1138 98l6-1', stroke: '#a8a8a8', fill: 'none', 'stroke-width': 1.2 }, svg);
  el('path', { d: 'M178 794H161M161 794l5-4M161 794l5 4', stroke: '#a8a8a8', fill: 'none', 'stroke-width': 1.2 }, svg);

  for (let p = 1250; p >= 900; p -= 25) {
    const y = 144 + (1250 - p) / 50 * 79.2;
    el('text', { class: 'axis-label', x: 1733, y: y }, svg, (p / 100).toFixed(2));
  }
  el('rect', { x: AXIS, y: 775, width: 76, height: 24, fill: '#000080' }, svg);
  el('text', { class: 'axis-cur', x: 1713, y: 787 }, svg, '8.35');
  vLine(svg, AXIS, 92, 826, '#a00000');
}

function drawIndicator(svg) {
  el('line', { x1: 5, x2: 1665, y1: 910.5, y2: 910.5, stroke: '#00a0a0', 'stroke-width': 1.5 }, svg);
  el('line', { x1: 5, x2: 1665, y1: 1208, y2: 1208, stroke: '#a0a000', 'stroke-width': 1.5 }, svg);

  let cross = '';
  for (let x = 5; x < 1668; x += 10.7) {
    cross += `M${x - 2.5} 1055.5l5 5m0-5l-5 5`;
  }
  el('path', { d: cross, stroke: '#d89898', 'stroke-width': 1, fill: 'none' }, svg);

  curve(svg, TREND_LINE.map(S), '#d8d800', 1.6);
  curve(svg, RETAIL_LINE.map(S), '#00d800', 1.6);
  curve(svg, MAIN_LINE.map(S), '#e000e0', 1.6);

  [90, 80, 70, 60, 50, 40, 30, 20, 10].forEach((v, n) => {
    el('text', { class: 'axis-label', x: 1733, y: 862 + n * 49.4 }, svg, v.toFixed(2));
  });
  vLine(svg, AXIS, 853, 1280, '#a00000');
}

drawKline(document.getElementById('kline'));
drawIndicator(document.getElementById('indicator'));
```
